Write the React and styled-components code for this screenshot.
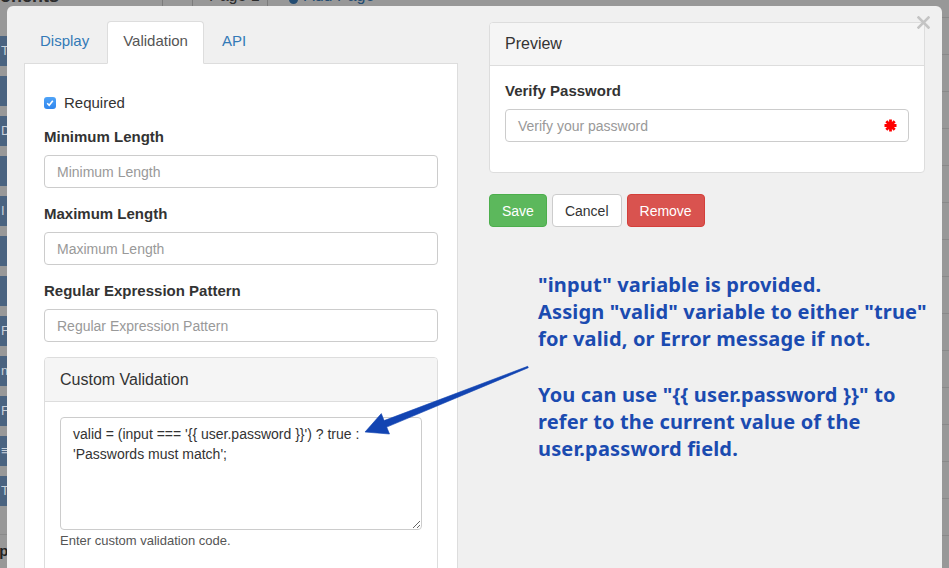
import React from 'react';
import styled, { createGlobalStyle } from 'styled-components';

const Global = createGlobalStyle`
  html, body { margin: 0; padding: 0; width: 949px; height: 568px; overflow: hidden; }
  body { font-family: "Liberation Sans", Arial, sans-serif; background: #989898; }
  #root { width: 949px; height: 568px; }
  * { box-sizing: border-box; }
`;

const Page = styled.div`
  position: relative;
  width: 949px;
  height: 568px;
  overflow: hidden;
  background: #989898;
  display: grid;
  grid-template-columns: 7px 935px 7px;
  grid-template-rows: 6px 562px;
  font-family: "Liberation Sans", Arial, sans-serif;
  color: #333;
`;

/* ---------- background page peeking around the modal ---------- */
const TopStrip = styled.div`
  grid-column: 1 / -1;
  display: flex;
  overflow: hidden;
  font-size: 16px;
  line-height: 16px;
`;

const TopCell = styled.div`
  flex: 0 0 ${(p) => p.$w}px;
  display: flex;
  align-items: flex-start;
  gap: 6px;
  padding-left: ${(p) => p.$pad || 0}px;
  border-right: ${(p) => (p.$divider ? '1px solid #7c7c7c' : 'none')};
  color: ${(p) => p.$color || '#2c2c2c'};
  font-weight: ${(p) => (p.$bold ? 700 : 400)};
  font-size: ${(p) => (p.$bold ? 18 : 16)}px;
  white-space: nowrap;
  span { margin-top: -12px; }
`;

const Dot = styled.i`
  width: 9px;
  height: 9px;
  border-radius: 50%;
  background: #234c72;
  margin-top: -5px;
`;

const LeftStrip = styled.div`
  display: flex;
  flex-direction: column;
  gap: 10px;
  padding-top: 30px;
  overflow: hidden;
`;

const SideBlock = styled.div`
  height: 30px;
  flex: 0 0 30px;
  background: #4a6380;
  color: #c9d1da;
  font-size: 13px;
  line-height: 30px;
  padding-left: 1px;
  overflow: hidden;
  white-space: nowrap;
`;

const SideFooter = styled.div`
  margin-top: 18px;
  border-top: 1px solid #8a8a8a;
  padding-top: 6px;
  font-size: 15px;
  line-height: 20px;
  font-weight: 700;
  color: #222;
  white-space: nowrap;
  text-indent: -10px;
  overflow: hidden;
`;

const RightStrip = styled.div`
  background: repeating-linear-gradient(
    to bottom,
    transparent 0px,
    transparent 11px,
    #898989 11px,
    #898989 12px,
    transparent 12px,
    transparent 37px
  );
`;

/* ---------- modal ---------- */
const Modal = styled.div`
  position: relative;
  background: #f0f0f0;
  border-radius: 6px 6px 0 0;
  padding: 15px 17px 0;
  display: grid;
  grid-template-columns: 434px 436px;
  column-gap: 31px;
  align-items: start;
`;

const Close = styled.button`
  position: absolute;
  top: 10px;
  right: 12px;
  width: 13px;
  height: 13px;
  padding: 0;
  border: 0;
  background: none;
  display: flex;
`;

const LeftCol = styled.div`
  display: flex;
  flex-direction: column;
`;

const TabList = styled.div`
  display: flex;
  align-items: flex-end;
  height: 43px;
  border-bottom: 1px solid #ddd;
`;

const Tab = styled.div`
  height: 43px;
  margin-bottom: -1px;
  margin-right: 2px;
  padding: 9px 15px 0;
  border: 1px solid ${(p) => (p.$active ? '#ddd' : 'transparent')};
  border-bottom-color: transparent;
  border-radius: 4px 4px 0 0;
  background: ${(p) => (p.$active ? '#fff' : 'transparent')};
  color: ${(p) => (p.$active ? '#555' : '#337ab7')};
  font-size: 15px;
  line-height: 20px;
`;

const TabPanel = styled.div`
  background: #fff;
  border: 1px solid #ddd;
  border-top: 0;
  padding: 29px 19px 0;
  height: 520px;
`;

const CheckRow = styled.label`
  display: flex;
  align-items: center;
  gap: 8px;
  font-size: 15px;
  line-height: 20px;
  margin-bottom: 13px;
`;

const CheckBox = styled.span`
  width: 12px;
  height: 12px;
  border-radius: 3px;
  background: linear-gradient(#4fa3f7, #2f86ee);
  display: flex;
  align-items: center;
  justify-content: center;
`;

const FormGroup = styled.div`
  margin-bottom: 15px;
`;

const Label = styled.div`
  font-size: 15px;
  font-weight: 700;
  line-height: 21px;
  margin-bottom: 8px;
  color: #333;
`;

const Input = styled.div`
  position: relative;
  height: 33px;
  border: 1px solid #ccc;
  border-radius: 4px;
  background: #fff;
  padding: 0 12px;
  display: flex;
  align-items: center;
  font-size: 14px;
  color: #999;
`;

const Asterisk = styled.span`
  position: absolute;
  right: 11px;
  top: 50%;
  margin-top: -7px;
  width: 13px;
  height: 13px;
  display: flex;
`;

const Panel = styled.div`
  border: 1px solid #ddd;
  border-radius: 4px;
  background: #fff;
  margin-top: ${(p) => p.$mt || 0}px;
  overflow: hidden;
`;

const PanelHeading = styled.div`
  background: #f5f5f5;
  border-bottom: 1px solid #ddd;
  padding: 10px 15px;
  font-size: 16px;
  line-height: ${(p) => p.$lh || 23}px;
  color: #333;
`;

const PanelBody = styled.div`
  padding: ${(p) => p.$pt || 15}px 15px ${(p) => p.$pb ?? 15}px;
`;

const CodeArea = styled.textarea`
  display: block;
  width: 100%;
  height: 113px;
  border: 1px solid #ccc;
  border-radius: 4px;
  padding: 6px 12px;
  font-family: "Liberation Sans", Arial, sans-serif;
  font-size: 14px;
  line-height: 20px;
  color: #333;
  resize: vertical;
  outline: none;
`;

const Help = styled.div`
  margin-top: 2px;
  font-size: 13px;
  line-height: 18px;
  color: #555;
  height: 60px;
`;

const RightCol = styled.div`
  display: flex;
  flex-direction: column;
  padding-top: 1px;
`;

const ButtonRow = styled.div`
  display: flex;
  gap: 5px;
  margin-top: 21px;
`;

const variants = {
  success: { bg: '#5cb85c', border: '#4cae4c', color: '#fff' },
  default: { bg: '#fff', border: '#ccc', color: '#333' },
  danger: { bg: '#d9534f', border: '#d43f3a', color: '#fff' },
};

const Button = styled.button`
  height: 33px;
  padding: 0 12px;
  border-radius: 4px;
  border: 1px solid ${(p) => variants[p.$v].border};
  background: ${(p) => variants[p.$v].bg};
  color: ${(p) => variants[p.$v].color};
  font-family: "Liberation Sans", Arial, sans-serif;
  font-size: 14px;
  line-height: 20px;
`;

const Note = styled.div`
  margin: 44px 0 0 49px;
  font-family: "Noto Sans", "Open Sans", sans-serif;
  font-weight: 700;
  font-size: 20px;
  letter-spacing: 0.15px;
  line-height: 27px;
  color: #1b4bb0;
  white-space: nowrap;
  display: flex;
  flex-direction: column;
  gap: 29px;
`;

const Arrow = styled.svg`
  position: absolute;
  left: 0;
  top: 0;
  pointer-events: none;
`;

export default function App() {
  return (
    <>
      <Global />
      <Page>
        <TopStrip>
          <TopCell $w={163} $divider $bold><span>onents</span></TopCell>
          <TopCell $w={30} $divider />
          <TopCell $w={75} $divider $pad={16}><span>Page 1</span></TopCell>
          <TopCell $w={200} $pad={21} $color="#234c72">
            <Dot />
            <span>Add Page</span>
          </TopCell>
        </TopStrip>

        <LeftStrip>
          <SideBlock>T</SideBlock>
          <SideBlock />
          <SideBlock>D</SideBlock>
          <SideBlock />
          <SideBlock>I</SideBlock>
          <SideBlock />
          <SideBlock />
          <SideBlock>F</SideBlock>
          <SideBlock>nc</SideBlock>
          <SideBlock>F</SideBlock>
          <SideBlock>≡</SideBlock>
          <SideBlock>T</SideBlock>
          <SideFooter>up</SideFooter>
        </LeftStrip>

        <Modal>
          <Close aria-label="Close">
            <svg width="13" height="13" viewBox="0 0 13 13">
              <path d="M1.5 1.5 L11.5 11.5 M11.5 1.5 L1.5 11.5" stroke="#c4c4c4" strokeWidth="2.6" strokeLinecap="square" />
            </svg>
          </Close>

          <LeftCol>
            <TabList>
              <Tab>Display</Tab>
              <Tab $active>Validation</Tab>
              <Tab>API</Tab>
            </TabList>
            <TabPanel>
              <CheckRow>
                <CheckBox>
                  <svg width="8" height="8" viewBox="0 0 8 8">
                    <path d="M1.2 4.2 L3.2 6.2 L6.8 1.8" fill="none" stroke="#fff" strokeWidth="1.6" />
                  </svg>
                </CheckBox>
                Required
              </CheckRow>

              <FormGroup>
                <Label>Minimum Length</Label>
                <Input>Minimum Length</Input>
              </FormGroup>
              <FormGroup>
                <Label>Maximum Length</Label>
                <Input>Maximum Length</Input>
              </FormGroup>
              <FormGroup>
                <Label>Regular Expression Pattern</Label>
                <Input>Regular Expression Pattern</Input>
              </FormGroup>

              <Panel $mt={1}>
                <PanelHeading>Custom Validation</PanelHeading>
                <PanelBody>
                  <CodeArea
                    readOnly
                    value={"valid = (input === '{{ user.password }}') ? true : 'Passwords must match';"}
                  />
                  <Help>Enter custom validation code.</Help>
                </PanelBody>
              </Panel>
            </TabPanel>
          </LeftCol>

          <RightCol>
            <Panel>
              <PanelHeading $lh={22}>Preview</PanelHeading>
              <PanelBody $pt={14} $pb={15}>
                <FormGroup>
                  <Label>Verify Password</Label>
                  <Input>
                    Verify your password
                    <Asterisk>
                      <svg width="13" height="13" viewBox="0 0 13 13">
                        <path
                          d="M6.5 0.5 V12.5 M0.5 6.5 H12.5 M2.3 2.3 L10.7 10.7 M10.7 2.3 L2.3 10.7"
                          stroke="#ff0000"
                          strokeWidth="2.8"
                        />
                      </svg>
                    </Asterisk>
                  </Input>
                </FormGroup>
              </PanelBody>
            </Panel>

            <ButtonRow>
              <Button $v="success">Save</Button>
              <Button $v="default">Cancel</Button>
              <Button $v="danger">Remove</Button>
            </ButtonRow>

            <Note>
              <div>
                "input" variable is provided.
                <br />
                Assign "valid" variable to either "true"
                <br />
                for valid, or Error message if not.
              </div>
              <div>
                You can use "{'{{'} user.password {'}}'}" to
                <br />
                refer to the current value of the
                <br />
                user.password field.
              </div>
            </Note>
          </RightCol>
        </Modal>

        <RightStrip />

        <Arrow width="949" height="568" viewBox="0 0 949 568">
          <polygon
            points="527.7,366.3 384.1,420.6 381.3,413.6 365,432 389.5,434 386.7,427.1 528.3,367.7"
            fill="#1244b2"
            stroke="#1244b2"
            strokeWidth="0.6"
            strokeLinejoin="round"
          />
        </Arrow>
      </Page>
    </>
  );
}
